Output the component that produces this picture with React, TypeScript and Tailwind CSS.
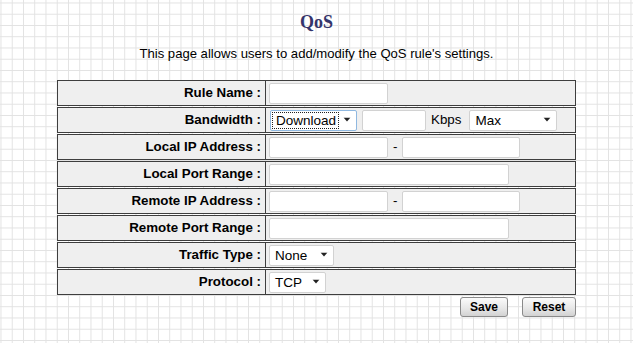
import React from "react";

const Arrow = () => (
  <svg width="8" height="5" viewBox="0 0 8 5" className="absolute right-[5px] top-1/2 -translate-y-1/2">
    <path d="M0.5 0 L7.5 0 L4 4 Z" fill="#222" />
  </svg>
);

function Select({ value, w, focus }: { value: string; w: string; focus?: boolean }) {
  return (
    <div
      className={`relative h-[21px] bg-white border rounded-[2px] flex items-center ${w} ${
        focus ? "border-[#8fb8e0]" : "border-[#d2d2d2]"
      }`}
    >
      {focus ? (
        <span className="ml-[1px] pl-[3px] pr-[2px] h-[17px] leading-[15px] border border-dotted border-[#222] text-[13.5px] text-black">
          {value}
        </span>
      ) : (
        <span className="pl-[5px] text-[13.5px] leading-[19px] text-black">{value}</span>
      )}
      <Arrow />
    </div>
  );
}

function Input({ w }: { w: string }) {
  return <div className={`h-[21px] bg-white border border-[#d2d2d2] rounded-[2px] ${w}`} />;
}

function Row({ label, children }: { label: string; children: React.ReactNode }) {
  return (
    <div className="flex h-[26px] border border-[#3e3e3e] bg-[#efefef]">
      <div className="w-[208px] border-r border-[#3e3e3e] flex items-center justify-end pr-[4px] font-bold text-[13.33px] text-black">
        {label}
      </div>
      <div className="flex-1 flex items-center pl-[3px]">{children}</div>
    </div>
  );
}

export default function App() {
  return (
    <div
      className="min-h-screen w-full bg-white bg-[linear-gradient(to_right,#e2e2e2_1px,transparent_1px),linear-gradient(to_bottom,#e2e2e2_1px,transparent_1px)] bg-[size:11.25px_11.25px] bg-[position:0.5px_2.5px]"
      style={{ fontFamily: '"Liberation Sans", Arial, sans-serif' }}
    >
      <div
        className="pt-[11px] text-center text-[18px] leading-[22px] font-bold text-[#35356b]"
        style={{ fontFamily: '"Liberation Serif", "Times New Roman", serif' }}
      >
        QoS
      </div>
      <div className="mt-[13px] text-center text-[13.1px] leading-[16px] text-black">
        This page allows users to add/modify the QoS rule's settings.
      </div>
      <div className="mt-[18px] mx-auto w-[519px] flex flex-col gap-px">
        <Row label="Rule Name :">
          <Input w="w-[119px]" />
        </Row>
        <Row label="Bandwidth :">
          <div className="ml-[1px]">
            <Select value="Download" w="w-[87px]" focus />
          </div>
          <div className="ml-[5px]">
            <Input w="w-[64px]" />
          </div>
          <span className="ml-[5px] text-[13.33px] text-black">Kbps</span>
          <div className="ml-[8px]">
            <Select value="Max" w="w-[88px]" />
          </div>
        </Row>
        <Row label="Local IP Address :">
          <Input w="w-[119px]" />
          <span className="px-[5px] text-[13.33px] text-black">-</span>
          <Input w="w-[118px]" />
        </Row>
        <Row label="Local Port Range :">
          <Input w="w-[240px]" />
        </Row>
        <Row label="Remote IP Address :">
          <Input w="w-[119px]" />
          <span className="px-[5px] text-[13.33px] text-black">-</span>
          <Input w="w-[118px]" />
        </Row>
        <Row label="Remote Port Range :">
          <Input w="w-[240px]" />
        </Row>
        <Row label="Traffic Type :">
          <Select value="None" w="w-[65px]" />
        </Row>
        <Row label="Protocol :">
          <Select value="TCP" w="w-[57px]" />
        </Row>
      </div>
      <div className="mx-auto w-[519px] flex justify-end mt-[2px]">
        <button className="w-[48px] h-[20px] rounded-[3px] border border-[#8a8a8a] bg-[linear-gradient(to_bottom,#fbfbfb,#e6e6e6_60%,#d2d2d2)] text-[12px] font-bold text-black leading-[18px]">
          Save
        </button>
        <button className="ml-[14px] w-[54px] h-[20px] rounded-[3px] border border-[#8a8a8a] bg-[linear-gradient(to_bottom,#fbfbfb,#e6e6e6_60%,#d2d2d2)] text-[12px] font-bold text-black leading-[18px]">
          Reset
        </button>
      </div>
    </div>
  );
}
